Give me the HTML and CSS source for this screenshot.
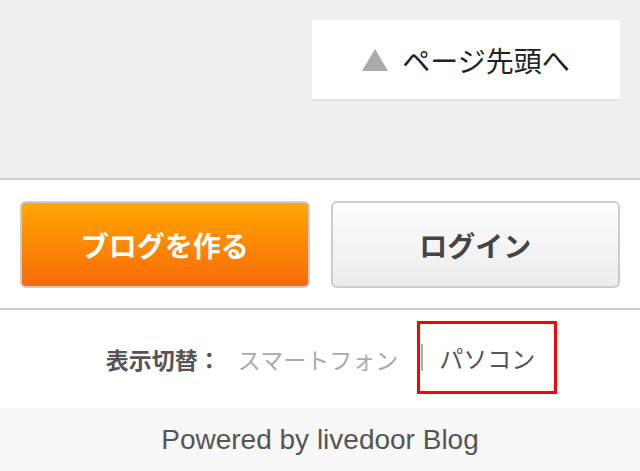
FILE: index.html
```html
<!DOCTYPE html>
<html lang="ja">
  <head>
    <meta charset="UTF-8">
    <title>ページ先頭へ</title>
    <link rel="stylesheet" href="styles.css">
  </head>
  <body>
    <div class="pagetop-area">
      <a class="pagetop" href="#top"><span class="arrow"></span>ページ先頭へ</a>
    </div>

    <div class="actions">
      <a class="btn btn-orange" href="#create">ブログを作る</a>
      <a class="btn btn-gray" href="#login">ログイン</a>
    </div>

    <div class="switch">
      <span class="switch-label">表示切替：</span>
      <a class="switch-link" href="#sp">スマートフォン</a>
      <span class="switch-current"><span class="sep"></span>パソコン</span>
    </div>

    <div class="footer">Powered by livedoor Blog</div>
  </body>
</html>
```

FILE: styles.css
```css
/* Base */
body {
  margin: 0;
  font-family: "Noto Sans CJK JP", "Liberation Sans", sans-serif;
  background-color: #fff;
}

a {
  text-decoration: none;
}

/* Page top area */
.pagetop-area {
  background-color: #efefef;
  padding: 20px 20px 79px;
  display: flex;
  justify-content: flex-end;
  border-bottom: 2px solid #ccc;
}

.pagetop {
  width: 308px;
  height: 79px;
  background-color: #fff;
  box-shadow: 0 2px 0 #e3e3e3;
  display: flex;
  align-items: center;
  justify-content: center;
  color: #222;
  font-size: 28px;
}

.arrow {
  width: 0;
  height: 0;
  border-left: 13px solid transparent;
  border-right: 13px solid transparent;
  border-bottom: 22px solid #aaa;
  margin-right: 14px;
}

/* Buttons */
.actions {
  display: flex;
  gap: 21px;
  padding: 21px 20px 20px;
  border-bottom: 2px solid #ccc;
}

.btn {
  flex: 1;
  height: 87px;
  box-sizing: border-box;
  border: 2px solid #ccc;
  border-radius: 6px;
  display: flex;
  align-items: center;
  justify-content: center;
  font-size: 28px;
  font-weight: bold;
}

.btn-orange {
  background: linear-gradient(#ffa703, #f86a07);
  color: #fff;
}

.btn-gray {
  background: linear-gradient(#fdfdfd, #ececec);
  color: #444;
}

/* Display switch */
.switch {
  height: 98px;
  display: flex;
  align-items: center;
  justify-content: center;
  padding-left: 23px;
  font-size: 23px;
}

.switch-label {
  color: #555;
  font-weight: bold;
  margin-right: 17px;
}

.switch-link {
  color: #aaa;
  margin-right: 19px;
}

.switch-current {
  width: 140px;
  height: 73px;
  box-sizing: border-box;
  border: 3px solid #f00;
  display: flex;
  align-items: center;
  padding-left: 1px;
  color: #555;
  font-size: 24px;
  margin-top: -3px;
}

.sep {
  width: 2px;
  height: 27px;
  background-color: #aaa;
  margin-right: 16px;
}

/* Footer */
.footer {
  background-color: #f7f7f7;
  height: 63px;
  display: flex;
  align-items: center;
  justify-content: center;
  font-family: "Liberation Sans", Arial, sans-serif;
  font-size: 28px;
  color: #555;
}
```
